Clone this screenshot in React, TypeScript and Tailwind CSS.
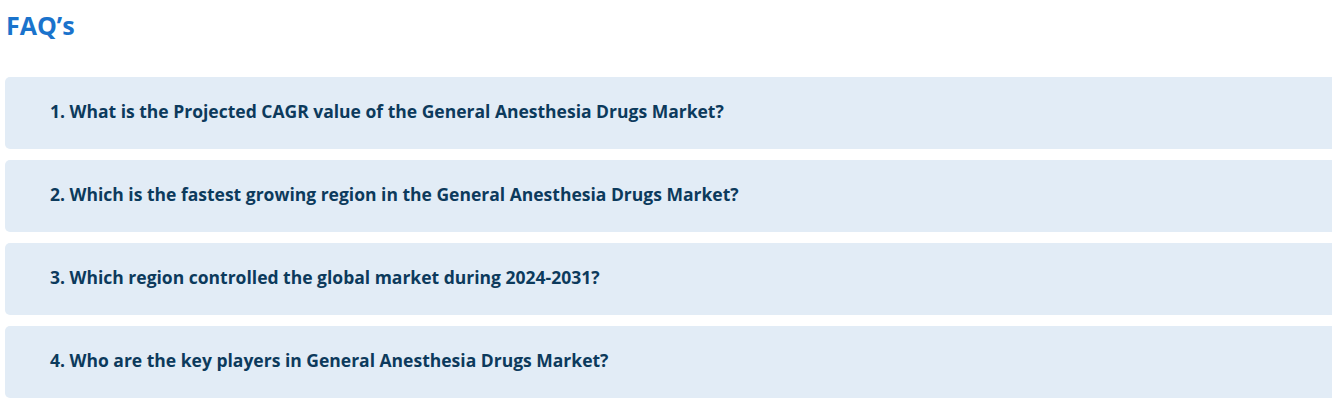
const faqs = [
  "1. What is the Projected CAGR value of the General Anesthesia Drugs Market?",
  "2. Which is the fastest growing region in the General Anesthesia Drugs Market?",
  "3. Which region controlled the global market during 2024-2031?",
  "4. Who are the key players in General Anesthesia Drugs Market?",
];

export default function App() {
  return (
    <div className="w-[1332px] h-[404px] overflow-hidden bg-white font-['Open_Sans',sans-serif]">
      <h2 className="pl-[6px] pt-[10px] text-[25px] leading-[30px] font-bold text-[#1a73cc]">
        FAQ’s
      </h2>
      <div className="mt-[37px] ml-[5px] w-[1340px] flex flex-col gap-[11px]">
        {faqs.map((q) => (
          <div
            key={q}
            className="h-[72px] flex items-center pl-[45px] pb-[4px] rounded-[5px] bg-[#e2ecf6] text-[17.5px] leading-[24px] font-bold text-[#0c3a5c]"
          >
            {q}
          </div>
        ))}
      </div>
    </div>
  );
}
